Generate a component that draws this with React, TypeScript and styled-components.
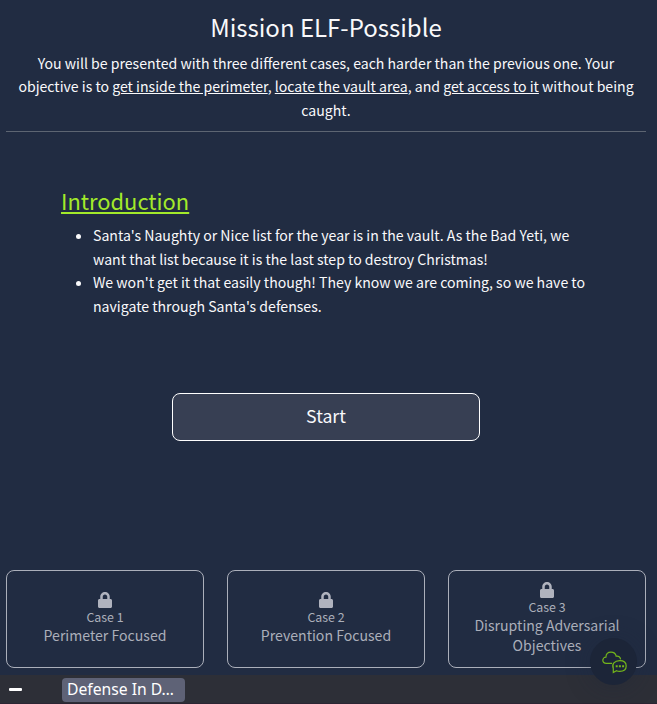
import React from "react";
import styled, { createGlobalStyle } from "styled-components";

const GlobalStyle = createGlobalStyle`
  * { box-sizing: border-box; }
  body {
    margin: 0;
    background: #212c42;
    color: #f9f9fb;
    font-family: "Noto Sans CJK SC", "Noto Sans", sans-serif;
    overflow: hidden;
  }
`;

const Page = styled.div`
  width: 657px;
  height: 704px;
  display: flex;
  flex-direction: column;
`;

const Mission = styled.main`
  height: 675px;
  padding: 0 11px 7px 6px;
  display: flex;
  flex-direction: column;
`;

const Header = styled.header`
  height: 132px;
  padding-top: 7px;
  border-bottom: 1px solid #5d6572;
  text-align: center;
`;

const Title = styled.h1`
  margin: 0;
  font-size: 24px;
  font-weight: 400;
  line-height: 40px;
`;

const Text = styled.p`
  margin: 4.5px 0 0;
  font-size: 14.1px;
  line-height: 23.6px;
  white-space: nowrap;
`;

const Intro = styled.section`
  height: 261px;
  padding: 53px 0 0 55px;
`;

const IntroTitle = styled.h2`
  margin: 0;
  color: #a3ea2a;
  font-size: 21.9px;
  font-weight: 400;
  line-height: 32px;
  text-decoration: underline;
  text-decoration-thickness: 2px;
  text-underline-offset: 2px;
`;

const Points = styled.ul`
  margin: 7px 0 0;
  padding-left: 32px;
  font-size: 14.1px;
  line-height: 23.6px;
  white-space: nowrap;
`;

const StartButton = styled.button`
  width: 308px;
  height: 48px;
  flex: none;
  align-self: center;
  padding: 0 0 4px;
  border: 1px solid #fff;
  border-radius: 8px;
  background: #373f53;
  color: #f9f9fb;
  font: inherit;
  font-size: 17.7px;
`;

const Cases = styled.div`
  margin-top: auto;
  display: grid;
  grid-template-columns: repeat(3, 198px);
  justify-content: space-between;
`;

const Card = styled.article`
  height: 98px;
  padding-bottom: 3px;
  display: flex;
  flex-direction: column;
  align-items: center;
  justify-content: center;
  border: 1px solid #abafba;
  border-radius: 8px;
  color: #abafba;
  text-align: center;
`;

const CaseNumber = styled.span`
  margin: 1px 0 -1px;
  font-size: 12.4px;
  line-height: 17px;
`;

const CaseName = styled.span`
  font-size: 14.1px;
  line-height: 20px;
  white-space: pre-line;
`;

const Lock = styled.svg`
  width: 14px;
  height: 16px;
  margin-top: 2px;
  fill: #b0b3be;
`;

const BottomBar = styled.footer`
  height: 29px;
  padding: 3px 0 1px 9px;
  display: flex;
  align-items: center;
  border-bottom: 1px solid #2b2533;
  background: #2d2f37;
`;

const Minimize = styled.span`
  width: 13px;
  height: 3px;
  margin-top: -1px;
  border-radius: 1px;
  background: #fff;
`;

const WindowTab = styled.div`
  width: 123px;
  height: 24px;
  margin-left: 40px;
  padding: 0 5px;
  border-radius: 4px;
  background: #5e6276;
  color: #fff;
  font: 15.7px/23px "Noto Sans", sans-serif;
  white-space: nowrap;
`;

const ChatButton = styled.button`
  position: fixed;
  left: 590px;
  top: 638px;
  width: 47px;
  height: 47px;
  padding: 1px 0 0 1px;
  display: grid;
  place-items: center;
  border: 0;
  border-radius: 50%;
  background: #1c2538;
  box-shadow: 0 2px 24px rgba(28, 37, 56, 0.35);
`;

const cases = [
  { number: 1, name: "Perimeter Focused" },
  { number: 2, name: "Prevention Focused" },
  { number: 3, name: "Disrupting Adversarial\nObjectives" },
];

function LockIcon() {
  return (
    <Lock viewBox="0 0 448 512" aria-hidden="true">
      <path d="M400 224h-24v-72C376 68.2 307.8 0 224 0S72 68.2 72 152v72H48c-26.5 0-48 21.5-48 48v192c0 26.500 21.500 48 48 48h352c26.500 0 48-21.500 48-48V272c0-26.500-21.500-48-48-48zm-104 0H152v-72c0-39.700 32.300-72 72-72s72 32.300 72 72v72z" />
    </Lock>
  );
}

function CloudChatIcon() {
  return (
    <svg width="25" height="23" viewBox="0 0 25 23" fill="none" stroke="#73b51b" strokeWidth="1.2">
      <path d="M10 12.400H4.200C2.200 12.400.8 11 .8 9.200c0-1.700 1.300-3 3.100-3C4 3.200 6 1.200 9 1.200c2.800 0 4.600 1.500 5.200 4 2.500-.4 4.100 1 4.400 3.200" />
      <path d="M11.300 21.500V17.500C9.500 13.200 12.500 9.700 17.700 9.700c4 0 6.500 2.200 6.500 5.300s-2.500 5.300-6.500 5.300c-1.200 0-2.300-.2-3.200-.6Z" />
      <path d="M13.700 15.200h2m1.200 0h2m1.200 0h2" strokeWidth="2" />
    </svg>
  );
}

export default function App() {
  return (
    <Page>
      <GlobalStyle />
      <Mission>
        <Header>
          <Title>Mission ELF-Possible</Title>
          <Text>
            You will be presented with three different cases, each harder than the previous one. Your
            <br />
            objective is to <u>get inside the perimeter</u>, <u>locate the vault area</u>, and <u>get access to it</u> without being
            <br />
            caught.
          </Text>
        </Header>
        <Intro>
          <IntroTitle>Introduction</IntroTitle>
          <Points>
            <li>
              Santa's Naughty or Nice list for the year is in the vault. As the Bad Yeti, we
              <br />
              want that list because it is the last step to destroy Christmas!
            </li>
            <li>
              We won't get it that easily though! They know we are coming, so we have to
              <br />
              navigate through Santa's defenses.
            </li>
          </Points>
        </Intro>
        <StartButton>Start</StartButton>
        <Cases>
          {cases.map((item) => (
            <Card key={item.number}>
              <LockIcon />
              <CaseNumber>Case {item.number}</CaseNumber>
              <CaseName>{item.name}</CaseName>
            </Card>
          ))}
        </Cases>
      </Mission>
      <BottomBar>
        <Minimize />
        <WindowTab>Defense In D…</WindowTab>
      </BottomBar>
      <ChatButton aria-label="Open chat">
        <CloudChatIcon />
      </ChatButton>
    </Page>
  );
}
